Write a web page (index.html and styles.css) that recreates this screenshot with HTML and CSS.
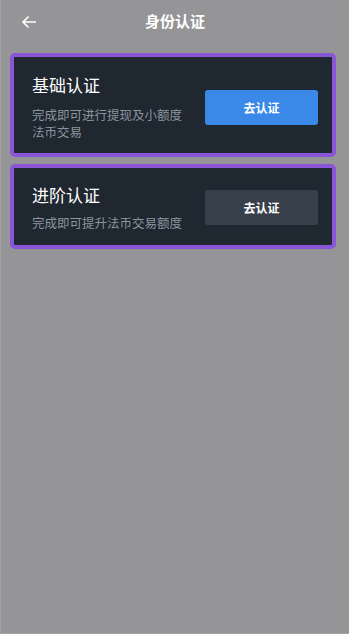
FILE: index.html
```html
<!DOCTYPE html>
<html lang="zh-CN">
<head>
    <meta charset="UTF-8">
    <meta name="viewport" content="width=device-width, initial-scale=1.0">
    <title>身份认证</title>
    <link rel="stylesheet" href="styles.css">
</head>
<body>
    <!-- Top bar with back arrow and title -->
    <header class="top-bar">
        <span class="back">
            <svg width="16" height="14" viewBox="0 0 16 14">
                <path d="M15 7H2M7.5 1.5L2 7l5.5 5.5" fill="none" stroke="#fff" stroke-width="1.6"/>
            </svg>
        </span>
        <h1 class="title">身份认证</h1>
    </header>

    <!-- Verification levels -->
    <main class="list">
        <div class="card">
            <div class="info">
                <div class="name">基础认证</div>
                <div class="desc">完成即可进行提现及小额度法币交易</div>
            </div>
            <button class="go primary">去认证</button>
        </div>
        <div class="card second">
            <div class="info">
                <div class="name">进阶认证</div>
                <div class="desc">完成即可提升法币交易额度</div>
            </div>
            <button class="go">去认证</button>
        </div>
    </main>
</body>
</html>
```

FILE: styles.css
```css
/* Page */
body {
    margin: 0;
    height: 634px;
    box-sizing: border-box;
    background-color: #959597;
    border-left: 1px solid #a3a3a5;
    border-bottom: 1px solid #a3a3a5;
    font-family: "Noto Sans CJK SC", "Noto Sans", sans-serif;
}
.top-bar {
    position: relative;
    height: 40px;
    display: flex;
    align-items: center;
    justify-content: center;
}
.back {
    position: absolute;
    left: 20px;
    top: 15px;
    display: flex;
}
.title {
    margin: 0;
    font-size: 15px;
    font-weight: bold;
    color: #fff;
    line-height: 1;
}
.list {
    padding: 13px 13px 0 9px;
    display: flex;
    flex-direction: column;
    gap: 7px;
}
.card {
    height: 96px;
    background-color: #1f2730;
    border: 4px solid #8a55d6;
    border-radius: 5px;
    display: flex;
    align-items: center;
    padding: 0 14px 0 18px;
}
.card.second {
    height: 77px;
}
.info {
    flex: 1;
    padding-top: 4px;
    padding-right: 12px;
}
.name {
    font-size: 17px;
    color: #fff;
    line-height: 22px;
    margin-bottom: 10px;
}
.desc {
    font-size: 12.5px;
    color: #8d959e;
    line-height: 17px;
    max-width: 152px;
}
.second .info {
    padding-top: 2px;
}
.second .name {
    margin-bottom: 8px;
}
.second .desc {
    max-width: none;
}
.go {
    width: 113px;
    height: 35px;
    margin-top: 4px;
    border: none;
    border-radius: 3px;
    background-color: #37404b;
    color: #fff;
    font-family: inherit;
    font-size: 12px;
    font-weight: bold;
    flex-shrink: 0;
}
.second .go {
    margin-top: 2px;
}
.go.primary {
    background-color: #3a88e8;
}
```
